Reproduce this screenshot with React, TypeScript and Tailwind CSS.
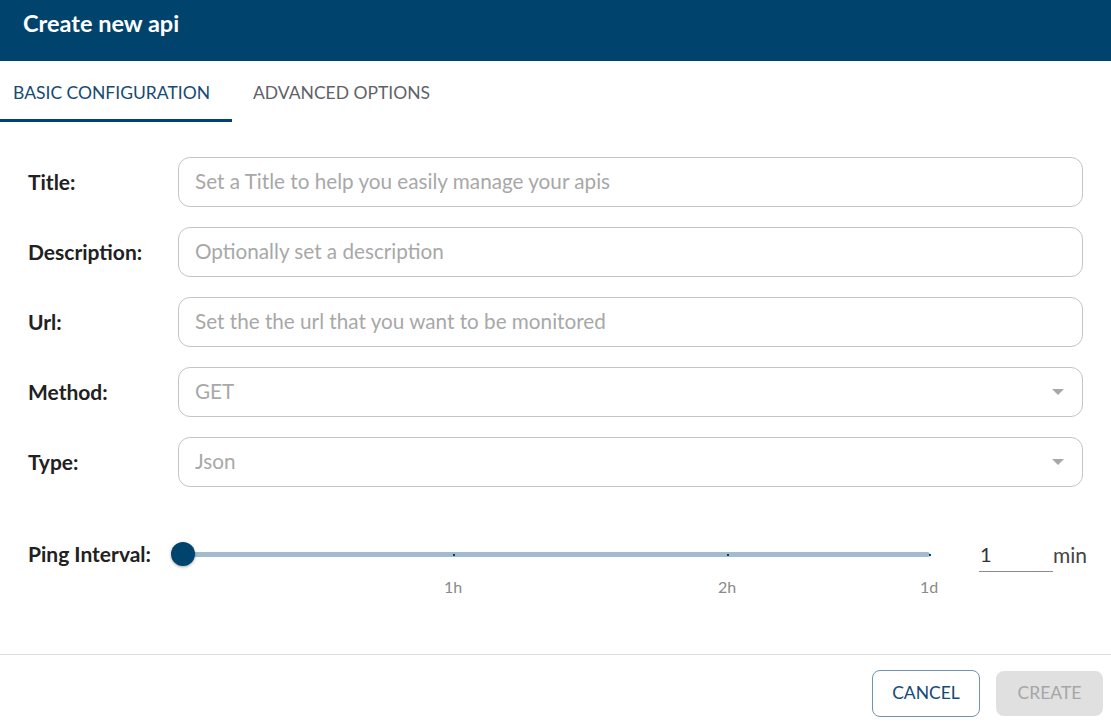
import React from "react";

function Field({ label, placeholder }: { label: string; placeholder: string }) {
  return (
    <div className="flex items-center h-[50px]">
      <div className="w-[150px] shrink-0 text-[21px] font-bold text-[#212121]">{label}</div>
      <div className="flex-1 h-[50px] rounded-[12px] border border-[#c4c4c4] flex items-center px-[16px] text-[20.7px] text-[#a8a8a8]">
        {placeholder}
      </div>
    </div>
  );
}

function Select({ label, value }: { label: string; value: string }) {
  return (
    <div className="flex items-center h-[50px]">
      <div className="w-[150px] shrink-0 text-[21px] font-bold text-[#212121]">{label}</div>
      <div className="flex-1 h-[50px] rounded-[12px] border border-[#c4c4c4] flex items-center justify-between pl-[16px] pr-[18px] text-[20.7px] text-[#a8a8a8]">
        <span>{value}</span>
        <svg width="12" height="6" viewBox="0 0 12 6">
          <path d="M0 0 L12 0 L6 6 Z" fill="#a8a8a8" />
        </svg>
      </div>
    </div>
  );
}

export default function App() {
  return (
    <div className="w-[1111px] h-[725px] bg-white overflow-hidden" style={{ fontFamily: "Lato, 'Noto Sans', sans-serif" }}>
      <div className="h-[61px] bg-[#00446e] flex items-center px-[23px] pb-[14px]">
        <span className="text-white text-[23.5px] font-bold">Create new api</span>
      </div>
      <div className="flex h-[61px]">
        <div className="w-[232px] flex items-center pl-[13px] text-[17.5px] text-[#174a74] border-b-[3px] border-[#00446e] pt-[7px]">
          BASIC CONFIGURATION
        </div>
        <div className="px-[21px] flex items-center text-[17.5px] text-[#5f6368] pt-[4px]">ADVANCED OPTIONS</div>
      </div>
      <div className="px-[28px] pt-[35px] flex flex-col gap-[20px]">
        <Field label="Title:" placeholder="Set a Title to help you easily manage your apis" />
        <Field label="Description:" placeholder="Optionally set a description" />
        <Field label="Url:" placeholder="Set the the url that you want to be monitored" />
        <Select label="Method:" value="GET" />
        <Select label="Type:" value="Json" />
      </div>
      <div className="px-[28px] mt-[42px] flex items-start h-[70px]">
        <div className="w-[143px] shrink-0 text-[21px] font-bold text-[#212121] leading-[24px] mt-[13px] whitespace-nowrap">Ping Interval:</div>
        <div className="w-[771px] shrink-0 pl-[12px] pr-[12px]">
          <div className="relative h-[50px]">
            <div className="absolute left-0 right-0 top-[23px] h-[5px] rounded-full bg-[#a3bccd]" />
            <div className="absolute left-[270px] top-[25px] w-[2px] h-[2px] bg-[#00446e]" />
            <div className="absolute left-[544px] top-[25px] w-[2px] h-[2px] bg-[#00446e]" />
            <div className="absolute left-[746px] top-[25px] w-[2px] h-[2px] bg-[#00446e]" />
            <div className="absolute left-[-12px] top-[13px] w-[24px] h-[24px] rounded-full bg-[#00446e] shadow-[0_1px_3px_rgba(0,0,0,0.35)]" />
            <div className="absolute left-[261px] top-[46px] text-[16px] font-normal text-[#8a8a8a]">1h</div>
            <div className="absolute left-[535px] top-[46px] text-[16px] font-normal text-[#8a8a8a]">2h</div>
            <div className="absolute left-[737px] top-[46px] text-[16px] font-normal text-[#8a8a8a]">1d</div>
          </div>
        </div>
        <div className="ml-[37px] w-[74px] shrink-0 h-[36px] border-b border-[#8a8a8a] mt-[7px] flex items-center pl-[1px] text-[20px] text-[#333]">1</div>
        <div className="text-[21px] text-[#444] mt-[10px] shrink-0">min</div>
      </div>
      <div className="mt-[55px] border-t border-[#dcdcdc] flex justify-end items-center gap-[16px] pr-[8px] pt-[15px]">
        <div className="w-[108px] h-[47px] rounded-[8px] border border-[#6f93b3] flex items-center justify-center text-[17.5px] text-[#174a74]">CANCEL</div>
        <div className="w-[107px] h-[45px] rounded-[8px] bg-[#e0e0e0] flex items-center justify-center text-[17.5px] text-[#a6a6a6]">CREATE</div>
      </div>
    </div>
  );
}
